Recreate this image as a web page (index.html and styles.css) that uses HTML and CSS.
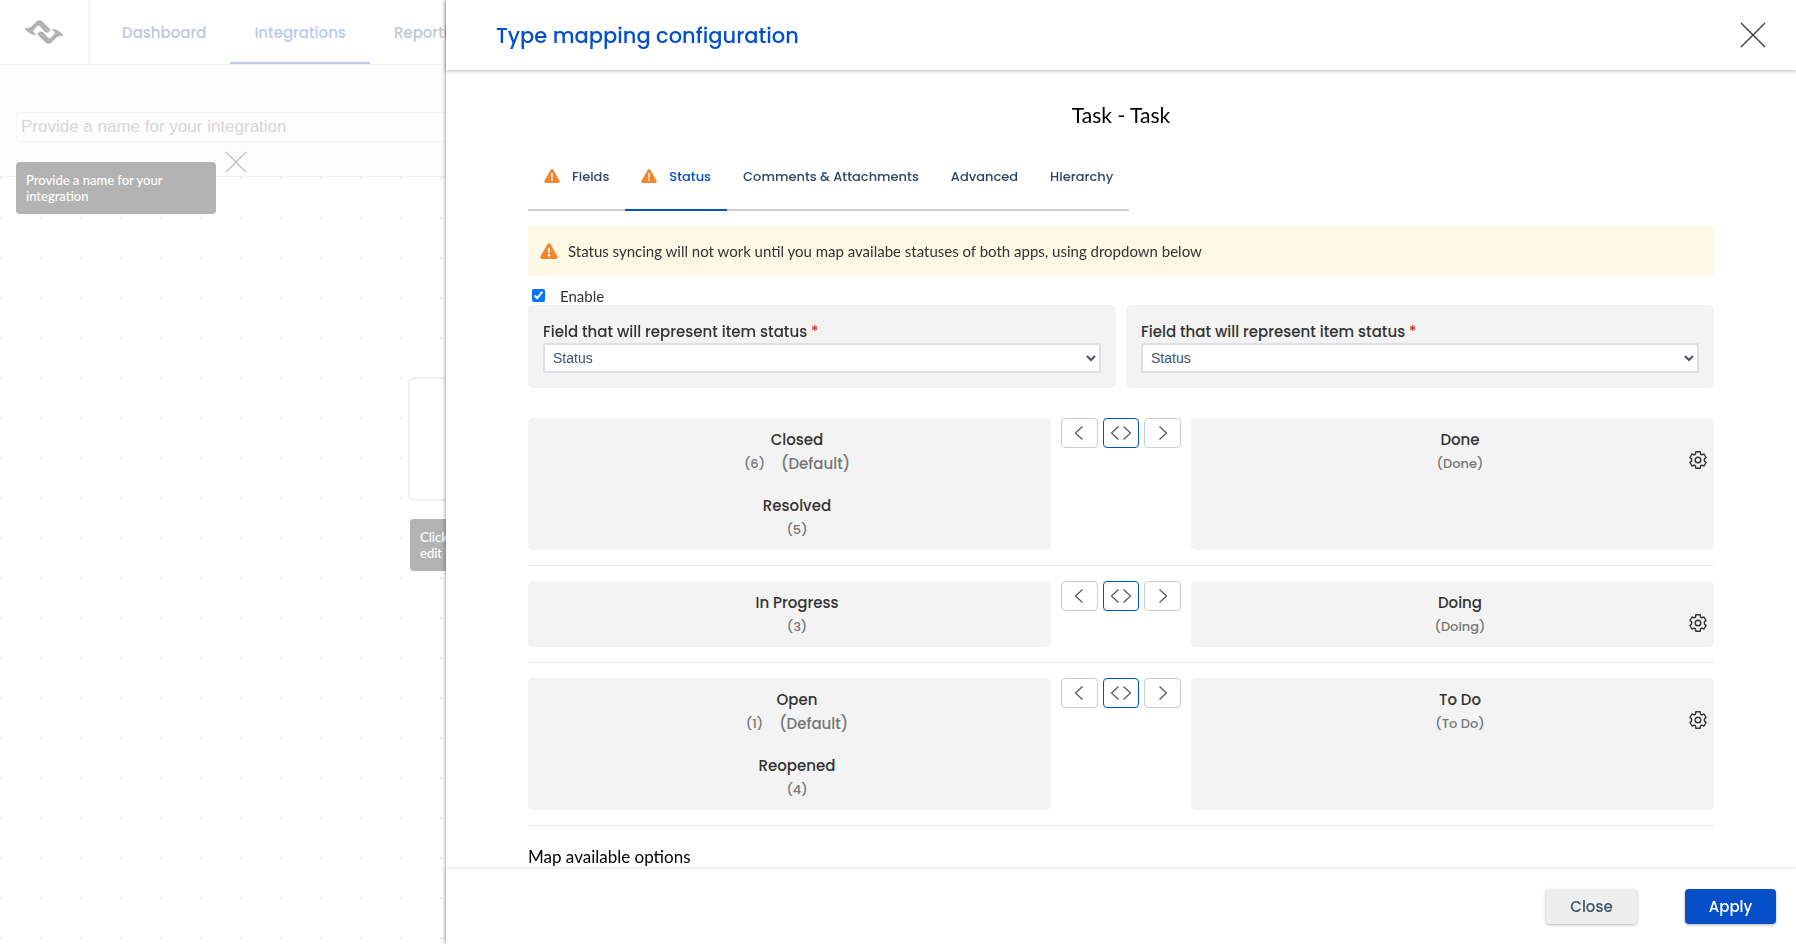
FILE: index.html
```html
<!DOCTYPE html>
<html lang="en">
<head>
    <meta charset="UTF-8">
    <title>Type mapping configuration</title>
    <link rel="stylesheet" href="styles.css">
</head>
<body>

<svg class="sprite" aria-hidden="true">
    <symbol id="warn" viewBox="0 0 16 14">
        <path d="M8 0c.6 0 1 .3 1.300.8l6.200 10.900c.6 1-.1 2.300-1.300 2.300H1.800C.6 14-.1 12.700.5 11.700L6.700.8C7 .3 7.400 0 8 0z" fill="#f0862f"/>
        <path d="M7.100 4.200h1.800l-.3 4.500H7.400z" fill="#fff"/>
        <circle cx="8" cy="10.700" r="1.100" fill="#fff"/>
    </symbol>
    <symbol id="cross" viewBox="0 0 26 26">
        <path d="M1 1l24 24M25 1L1 25" fill="none" stroke="currentColor" stroke-width="1.200"/>
    </symbol>
    <symbol id="left" viewBox="0 0 10 14">
        <path d="M8.500.5L1.500 7l7 6.500" fill="none" stroke="#555" stroke-width="1.200"/>
    </symbol>
    <symbol id="right" viewBox="0 0 10 14">
        <path d="M1.500.5l7 6.500-7 6.500" fill="none" stroke="#555" stroke-width="1.200"/>
    </symbol>
    <symbol id="gear" viewBox="0 0 18 18">
        <path d="M6.800.8h4.400l.3 2.300 1.300.8 2.200-.9 2.100 3.500-1.700 1.400v2.200l1.700 1.400-2.100 3.500-2.200-.9-1.300.8-.3 2.300H6.800l-.3-2.300-1.300-.8-2.200.9L.9 11.500l1.700-1.400V7.900L.9 6.500 3 3l2.200.9 1.300-.8z" fill="none" stroke="#333" stroke-width="1.400" stroke-linejoin="round"/>
        <circle cx="9" cy="9" r="2.800" fill="none" stroke="#333" stroke-width="1.400"/>
    </symbol>
</svg>

<div class="page">
    <div class="topbar">
        <a href="#" class="logo" aria-label="Home">
            <svg width="40" height="24" viewBox="0 0 40 24" fill="#b3b3b3">
                <path id="wave" d="M0 8.200C5 8.400 7 7 9 5L12.500 1.500Q15.500-1 18.500 1.500L27 10L24 12.500Q22 13 20.500 11.500L15.500 6Q14.500 5.200 13.500 6L10 9.500Q8.500 11 10 12.500L12.500 15Q6 15.500 0 8.200z"/>
                <use href="#wave" transform="rotate(180 20 12)"/>
            </svg>
        </a>
        <a href="#">Dashboard</a>
        <a href="#" class="active">Integrations</a>
        <a href="#">Reporting</a>
    </div>
    <div class="nameBar">
        <input type="text" class="nameInput" placeholder="Provide a name for your integration" aria-label="Integration name">
        <div class="tip tipName">Provide a name for your integration</div>
        <button type="button" class="tipClose" aria-label="Close hint"><svg width="22" height="22"><use href="#cross"/></svg></button>
    </div>
    <div class="canvas">
        <div class="node"></div>
        <div class="tip tipNode">Click here to edit integration</div>
    </div>
</div>

<div class="panel">
    <div class="panelHead">
        <h1>Type mapping configuration</h1>
        <button type="button" class="panelClose" aria-label="Close panel"><svg width="26" height="26"><use href="#cross"/></svg></button>
    </div>
    <div class="panelBody">
        <h2>Task - Task</h2>
        <div class="tabs">
            <a href="#"><svg width="16" height="14"><use href="#warn"/></svg>Fields</a>
            <a href="#" class="active"><svg width="16" height="14"><use href="#warn"/></svg>Status</a>
            <a href="#">Comments &amp; Attachments</a>
            <a href="#">Advanced</a>
            <a href="#">Hierarchy</a>
        </div>
        <div class="alert">
            <svg width="18" height="16"><use href="#warn"/></svg>
            <span>Status syncing will not work until you map availabe statuses of both apps, using dropdown below</span>
        </div>
        <div class="enable">
            <input type="checkbox" id="enable" checked>
            <label for="enable">Enable</label>
        </div>
        <div class="fields">
            <div class="field">
                <label for="fieldLeft">Field that will represent item status <i>*</i></label>
                <select id="fieldLeft"><option>Status</option></select>
            </div>
            <div class="field">
                <label for="fieldRight">Field that will represent item status <i>*</i></label>
                <select id="fieldRight"><option>Status</option></select>
            </div>
        </div>

        <div class="mapRow">
            <div class="side">
                <div class="item"><b>Closed</b><p><span>(6)</span><em>(Default)</em></p></div>
                <div class="item"><b>Resolved</b><p><span>(5)</span></p></div>
            </div>
            <div class="dirs">
                <button type="button" aria-label="To left"><svg width="10" height="14"><use href="#left"/></svg></button>
                <button type="button" class="on" aria-label="Both ways"><svg width="10" height="14"><use href="#left"/></svg><svg width="10" height="14"><use href="#right"/></svg></button>
                <button type="button" aria-label="To right"><svg width="10" height="14"><use href="#right"/></svg></button>
            </div>
            <div class="side">
                <div class="item"><b>Done</b><p><span>(Done)</span></p></div>
                <button type="button" class="gear" aria-label="Settings"><svg width="18" height="18"><use href="#gear"/></svg></button>
            </div>
        </div>

        <div class="mapRow">
            <div class="side">
                <div class="item"><b>In Progress</b><p><span>(3)</span></p></div>
            </div>
            <div class="dirs">
                <button type="button" aria-label="To left"><svg width="10" height="14"><use href="#left"/></svg></button>
                <button type="button" class="on" aria-label="Both ways"><svg width="10" height="14"><use href="#left"/></svg><svg width="10" height="14"><use href="#right"/></svg></button>
                <button type="button" aria-label="To right"><svg width="10" height="14"><use href="#right"/></svg></button>
            </div>
            <div class="side">
                <div class="item"><b>Doing</b><p><span>(Doing)</span></p></div>
                <button type="button" class="gear" aria-label="Settings"><svg width="18" height="18"><use href="#gear"/></svg></button>
            </div>
        </div>

        <div class="mapRow">
            <div class="side">
                <div class="item"><b>Open</b><p><span>(1)</span><em>(Default)</em></p></div>
                <div class="item"><b>Reopened</b><p><span>(4)</span></p></div>
            </div>
            <div class="dirs">
                <button type="button" aria-label="To left"><svg width="10" height="14"><use href="#left"/></svg></button>
                <button type="button" class="on" aria-label="Both ways"><svg width="10" height="14"><use href="#left"/></svg><svg width="10" height="14"><use href="#right"/></svg></button>
                <button type="button" aria-label="To right"><svg width="10" height="14"><use href="#right"/></svg></button>
            </div>
            <div class="side">
                <div class="item"><b>To Do</b><p><span>(To Do)</span></p></div>
                <button type="button" class="gear" aria-label="Settings"><svg width="18" height="18"><use href="#gear"/></svg></button>
            </div>
        </div>

        <h3>Map available options</h3>
    </div>
    <div class="panelFoot">
        <button type="button" class="btn">Close</button>
        <button type="button" class="btn btnApply">Apply</button>
    </div>
</div>

</body>
</html>
```
FILE: styles.css
```css
*{
    margin:0;
    padding:0;
    box-sizing: border-box;
}
body{
    height: 100vh;
    overflow: hidden;
    font-family: Lato, "Open Sans", sans-serif;
    font-size: 15px;
    color: #333;
    background: #fff;
}
a{
    text-decoration: none;
}
button{
    border: none;
    background: none;
    cursor: pointer;
}
svg{
    display: block;
}
.sprite{
    position: absolute;
    width: 0;
    height: 0;
}

/* page under the panel */
.page{
    height: 100vh;
    display: flex;
    flex-direction: column;
}
.topbar{
    height: 64px;
    flex: none;
    display: flex;
    background: #fff;
}
.topbar a{
    padding: 0 24px;
    line-height: 66px;
    font-family: Poppins, Inter, sans-serif;
    font-size: 15px;
    font-weight: 500;
    color: #c2c7d0;
}
.topbar a.active{
    color: #bdc7f0;
    border-bottom: 2px solid #bdc7f0;
}
.topbar .logo{
    width: 90px;
    margin-right: 8px;
    display: flex;
    align-items: center;
    border-right: 2px solid #f7f7f7;
}
.nameBar{
    height: 113px;
    flex: none;
    padding: 47px 16px 0;
    position: relative;
    background: #fcfcfc;
    border-top: 1px solid #f3f3f3;
    border-bottom: 1px solid #f0f0f0;
}
.nameInput{
    width: 100%;
    height: 30px;
    padding: 0 4px;
    border: 1px solid #f5f5f5;
    border-radius: 4px;
    background: #fdfdfd;
    font-family: "Liberation Sans", Arial, sans-serif;
    font-size: 17px;
}
.nameInput::placeholder{
    color: #d6d6d6;
}
.tip{
    position: absolute;
    width: 200px;
    padding: 10px;
    border-radius: 4px;
    background: #b3b3b3;
    color: #fff;
    font-size: 13px;
    font-weight: 500;
    line-height: 16px;
}
.tipName{
    left: 16px;
    top: 97px;
    z-index: 1;
}
.tipClose{
    position: absolute;
    left: 225px;
    top: 86px;
    color: #b3b3b3;
}
.canvas{
    flex: 1;
    position: relative;
    background: radial-gradient(circle at 1px 1px, #efefef 1px, transparent 2px) 0 0 / 40px 40px;
}
.node{
    position: absolute;
    left: 408px;
    top: 200px;
    width: 124px;
    height: 124px;
    border: 2px solid #efefef;
    border-radius: 6px;
    background: #fff;
}
.tipNode{
    left: 410px;
    top: 342px;
    width: 110px;
}

/* panel */
.panel{
    position: fixed;
    left: 446px;
    right: 0;
    top: 0;
    bottom: 0;
    display: flex;
    flex-direction: column;
    background: #fff;
    box-shadow: 0 0 4px rgba(0,0,0,.5);
}
.panelHead{
    height: 70px;
    flex: none;
    padding: 0 30px 0 50px;
    display: flex;
    align-items: center;
    justify-content: space-between;
    box-shadow: 0 1px 4px rgba(0,0,0,.3);
}
.panelHead h1{
    font-family: Poppins, Inter, sans-serif;
    font-size: 21px;
    font-weight: 500;
    color: #0550c8;
}
.panelClose{
    color: #333;
}
.panelBody{
    flex: 1;
    min-height: 0;
    padding: 30px 82px 0;
    overflow: hidden;
}
.panelBody h2{
    font-size: 21px;
    font-weight: 400;
    line-height: 30px;
    text-align: center;
    color: #000;
}
.tabs{
    width: fit-content;
    height: 49px;
    margin-top: 32px;
    display: flex;
}
.tabs a{
    padding: 0 16px;
    display: flex;
    gap: 12px;
    line-height: 30px;
    border-bottom: 2px solid #ccc;
    font-family: Poppins, Inter, sans-serif;
    font-size: 13px;
    font-weight: 500;
    color: #344563;
}
.tabs a svg{
    margin-top: 7px;
}
.tabs a.active{
    color: #0550c8;
    border-color: #0550c8;
}
.alert{
    height: 50px;
    margin-top: 15px;
    padding: 0 12px;
    display: flex;
    align-items: center;
    gap: 10px;
    border-radius: 4px;
    background: #fff8e5;
}
.enable{
    height: 29px;
    padding: 10px 4px 0;
    display: flex;
    align-items: center;
    gap: 15px;
}
.enable input{
    width: 13px;
    height: 13px;
    accent-color: #0075ff;
}
.fields{
    display: flex;
    gap: 10px;
    margin-bottom: 30px;
}
.field{
    flex: 1;
    padding: 15px;
    border-radius: 5px;
    background: #f3f3f3;
}
.field label{
    display: block;
    font-family: Poppins, Inter, sans-serif;
    font-size: 15px;
    font-weight: 500;
    line-height: 23px;
}
.field i{
    font-style: normal;
    color: #d0342c;
}
.field select{
    width: 100%;
    height: 30px;
    padding: 0 4px;
    border: 2px solid #dfdfe6;
    border-radius: 2px;
    background: #fff;
    font-family: "Liberation Sans", Arial, sans-serif;
    font-size: 14px;
    color: #42526e;
}
.mapRow{
    display: grid;
    grid-template-columns: 1fr 120px 1fr;
    gap: 10px;
    padding-bottom: 15px;
    margin-bottom: 15px;
    border-bottom: 1px solid #e6e6e6;
}
.side{
    position: relative;
    border-radius: 5px;
    background: #f3f3f3;
}
.item{
    height: 66px;
    padding: 10px 0 0 15px;
    text-align: center;
    font-family: Poppins, Inter, sans-serif;
}
.item b{
    display: block;
    font-size: 15px;
    font-weight: 500;
    line-height: 24px;
}
.item p{
    display: flex;
    align-items: center;
    justify-content: center;
    gap: 16px;
    line-height: 23px;
    font-weight: 500;
    color: #777;
}
.item span{
    font-size: 13px;
}
.item em{
    font-size: 15px;
    font-style: normal;
}
.gear{
    position: absolute;
    right: 7px;
    top: 33px;
}
.dirs{
    display: flex;
    gap: 5px;
}
.dirs button{
    flex: 1;
    height: 30px;
    display: flex;
    align-items: center;
    justify-content: center;
    gap: 2px;
    border: 1px solid #ccc;
    border-radius: 4px;
}
.dirs button.on{
    border-color: #0550c8;
}
.panelBody h3{
    font-size: 17px;
    font-weight: 400;
    line-height: 32px;
    color: #000;
}
.panelFoot{
    height: 75px;
    flex: none;
    padding: 0 20px;
    display: flex;
    align-items: center;
    justify-content: flex-end;
    gap: 48px;
    background: #fff;
    box-shadow: 0 -1px 4px rgba(0,0,0,.12);
}
.btn{
    width: 91px;
    height: 35px;
    border-radius: 4px;
    background: #eee;
    box-shadow: 0 1px 3px rgba(0,0,0,.3);
    font-family: Poppins, Inter, sans-serif;
    font-size: 15px;
    font-weight: 500;
    color: #42526e;
}
.btnApply{
    background: #0550c8;
    color: #fff;
}
```
